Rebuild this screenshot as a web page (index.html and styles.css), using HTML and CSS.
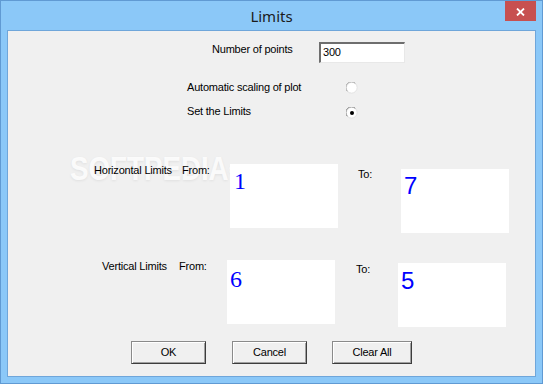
FILE: index.html
```html
<!DOCTYPE html>
<html>
<head>
<meta charset="utf-8">
<title>Limits</title>
<link rel="stylesheet" href="styles.css">
</head>
<body>
<div class="window">
  <div class="titlebar">
    <span class="spacer"></span>
    <span class="title">Limits</span>
    <button class="close" aria-label="Close">
      <svg width="9" height="8" viewBox="0 0 9 8"><path d="M1 0.5 L8 7.5 M8 0.5 L1 7.5" stroke="#fff" stroke-width="1.8" fill="none"/></svg>
    </button>
  </div>
  <div class="client">
    <div class="watermark">SOFTPEDIA<sup>®</sup></div>

    <div class="row row-points">
      <span class="label l-points">Number of points</span>
      <span class="textbox">300</span>
    </div>

    <div class="row row-auto">
      <span class="label l-radio">Automatic scaling of plot</span>
      <span class="radio r-auto"><svg width="12" height="12" viewBox="0 0 12 12"><circle cx="6" cy="6" r="5" fill="#fff"/><path d="M1.5 9.5 A5 5 0 0 1 9.5 1.5" stroke="#a0a0a0" stroke-width="1" fill="none"/><path d="M9.5 1.5 A5 5 0 0 1 1.5 9.5" stroke="#e3e3e3" stroke-width="1" fill="none"/></svg></span>
    </div>

    <div class="row row-set">
      <span class="label l-radio">Set the Limits</span>
      <span class="radio r-set"><svg width="12" height="12" viewBox="0 0 12 12"><circle cx="6" cy="6" r="5" fill="#fff"/><path d="M1.5 9.5 A5 5 0 0 1 9.5 1.5" stroke="#808080" stroke-width="1" fill="none"/><path d="M9.5 1.5 A5 5 0 0 1 1.5 9.5" stroke="#e3e3e3" stroke-width="1" fill="none"/><circle cx="6" cy="6" r="2" fill="#000"/></svg></span>
    </div>

    <div class="row row-h">
      <span class="label h-name">Horizontal Limits</span>
      <span class="label h-from">From:</span>
      <div class="valbox h-box1"><span class="digit serif d1">1</span></div>
      <span class="label h-to">To:</span>
      <div class="valbox h-box2"><span class="digit sans d7">7</span></div>
    </div>

    <div class="row row-v">
      <span class="label v-name">Vertical Limits</span>
      <span class="label v-from">From:</span>
      <div class="valbox v-box1"><span class="digit serif d6">6</span></div>
      <span class="label v-to">To:</span>
      <div class="valbox v-box2"><span class="digit sans d5">5</span></div>
    </div>

    <div class="row row-buttons">
      <button class="btn b-ok">OK</button>
      <button class="btn b-cancel">Cancel</button>
      <button class="btn b-clear">Clear All</button>
    </div>
  </div>
</div>
</body>
</html>
```
FILE: styles.css
```css
html, body {
  margin: 0;
  padding: 0;
  background: #8bc8f8;
}

.window {
  width: 543px;
  height: 384px;
  box-sizing: border-box;
  border: 1px solid #609ad3;
  background: #8bc8f8;
  padding: 0 6px 6px 6px;
  display: flex;
  flex-direction: column;
  font-family: "Liberation Sans", Arial, sans-serif;
}

.titlebar {
  height: 29px;
  display: grid;
  grid-template-columns: 1fr auto 1fr;
  align-items: start;
}

.title {
  font-family: "Noto Sans", "Open Sans", sans-serif;
  font-size: 15px;
  line-height: 20px;
  padding-top: 5px;
  color: #1b1b1b;
}

.close {
  justify-self: end;
  width: 31px;
  height: 20px;
  margin: 0;
  padding: 0;
  border: none;
  background: #c75050;
  display: flex;
  align-items: center;
  justify-content: center;
}

.close svg {
  display: block;
  margin-top: 1px;
}

.client {
  flex: 1;
  position: relative;
  border: 1px solid #6fa6da;
  background: #f0f0f0;
  overflow: hidden;
}

.watermark {
  position: absolute;
  left: 62px;
  top: 121px;
  font-family: "Liberation Sans", Arial, sans-serif;
  font-weight: bold;
  font-size: 33px;
  line-height: 33px;
  color: rgba(255, 255, 255, 0.85);
  text-shadow: 0 1px 3px rgba(0, 0, 0, 0.07);
  transform: scaleX(0.84);
  transform-origin: left top;
  letter-spacing: 0;
  white-space: nowrap;
}

.watermark sup {
  font-size: 10px;
  vertical-align: top;
  position: relative;
  top: 2px;
}

.row {
  display: flex;
  align-items: flex-start;
  position: relative;
}

.label {
  font-size: 11px;
  line-height: 13px;
  letter-spacing: -0.2px;
  color: #000;
  white-space: nowrap;
}

/* Row 1 */
.row-points { margin-top: 11px; }
.l-points { margin-left: 204px; margin-top: 1px; width: 107px; }

.textbox {
  box-sizing: border-box;
  width: 86px;
  height: 21px;
  background: #fff;
  border-style: solid;
  border-width: 2px 1px 1px 2px;
  border-color: #6e6e6e #e8e8e8 #e8e8e8 #6e6e6e;
  font-size: 11px;
  line-height: 13px;
  letter-spacing: -0.2px;
  padding: 2px 0 0 2px;
  color: #000;
}

/* Radio rows */
.row-auto { margin-top: 18px; }
.row-set { margin-top: 11px; }
.l-radio { margin-left: 179px; width: 159px; }
.radio { display: block; width: 12px; height: 12px; }
.radio svg { display: block; }
.r-auto { margin-top: 1px; }
.r-set { margin-top: 2px; }

/* Limit boxes */
.valbox {
  box-sizing: border-box;
  width: 108px;
  height: 64px;
  background: #fff;
  padding-left: 3px;
}

.digit {
  display: block;
  font-size: 24px;
  line-height: 24px;
  color: #0000ff;
}

.serif { font-family: "Liberation Serif", "Times New Roman", serif; }
.sans { font-family: "Liberation Sans", Arial, sans-serif; }

.d1 { padding-top: 5px; padding-left: 1px; }
.d7 { padding-top: 5px; }
.d6 { padding-top: 7px; }
.d5 { padding-top: 6px; }

.row-h { margin-top: 45px; }
.h-name { margin-left: 86px; width: 88px; margin-top: 0; }
.h-from { width: 48px; }
.h-box1 { }
.h-to { margin-left: 20px; width: 43px; margin-top: 4px; }
.h-box2 { margin-top: 5px; }

.row-v { margin-top: 27px; }
.v-name { margin-left: 94px; width: 77px; }
.v-from { width: 48px; }
.v-box1 { }
.v-to { margin-left: 21px; width: 42px; margin-top: 3px; }
.v-box2 { margin-top: 3px; }

/* Buttons */
.row-buttons { margin-top: 14px; }

.btn {
  box-sizing: border-box;
  height: 23px;
  margin: 0;
  padding: 0;
  background: #f0f0f0;
  border: 1px solid;
  border-color: #8a8a8a #3c3c3c #3c3c3c #8a8a8a;
  box-shadow: inset 1px 1px 0 #ffffff, inset -1px -1px 0 #a0a0a0;
  font-family: "Liberation Sans", Arial, sans-serif;
  font-size: 11px;
  letter-spacing: -0.2px;
  color: #000;
  line-height: 13px;
}

.b-ok { margin-left: 123px; width: 75px; }
.b-cancel { margin-left: 26px; width: 75px; }
.b-clear { margin-left: 25px; width: 80px; }
```
